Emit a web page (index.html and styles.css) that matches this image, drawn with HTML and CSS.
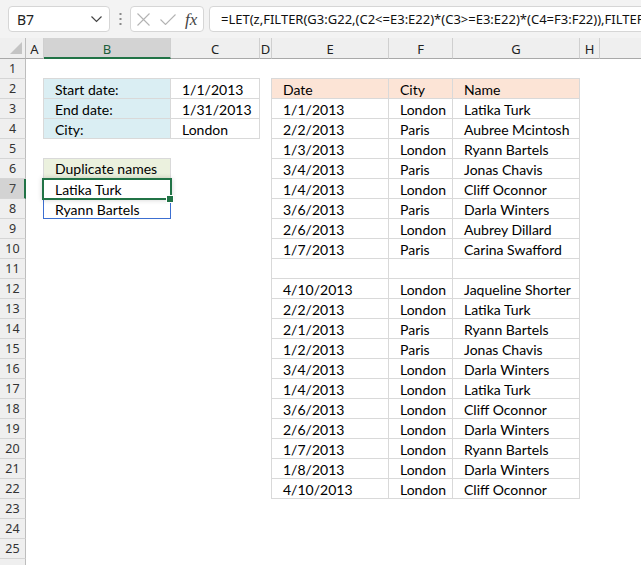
FILE: index.html
```html
<!DOCTYPE html>
<html>
<head>
<meta charset="utf-8">
<link rel="stylesheet" href="styles.css">
</head>
<body>
<div class="app">
  <div class="toolbar">
    <div class="namebox">
      <span class="ref">B7</span>
      <svg class="chev" width="11" height="7" viewBox="0 0 11 7"><path d="M0.5 0.5 L5.5 5.5 L10.5 0.5" fill="none" stroke="#444" stroke-width="1.2"/></svg>
    </div>
    <div class="dots">
      <svg width="3" height="12" viewBox="0 0 3 12"><rect x="0.5" y="0" width="2" height="2" fill="#8a8a8a"/><rect x="0.5" y="5" width="2" height="2" fill="#8a8a8a"/><rect x="0.5" y="10" width="2" height="2" fill="#8a8a8a"/></svg>
    </div>
    <div class="fxbox">
      <svg class="ico-x" width="13" height="13" viewBox="0 0 13 13"><path d="M0.5 0.5 L12.5 12.5 M12.5 0.5 L0.5 12.5" stroke="#b3b3b3" stroke-width="1.1" fill="none"/></svg>
      <svg class="ico-ok" width="16" height="11" viewBox="0 0 16 11"><path d="M0.5 5.5 L5.5 10.5 L15.5 0.5" stroke="#b3b3b3" stroke-width="1.1" fill="none"/></svg>
      <span class="fx">fx</span>
    </div>
    <div class="formula">=LET(z,FILTER(G3:G22,(C2&lt;=E3:E22)*(C3&gt;=E3:E22)*(C4=F3:F22)),FILTER</div>
  </div>

  <div class="sheet">
    <div class="corner"><svg width="12" height="12" viewBox="0 0 12 12"><polygon points="12,0 12,12 0,12" fill="#c4c4c4"/></svg></div>
    <div class="colhdr">A</div>
    <div class="colhdr active">B</div>
    <div class="colhdr">C</div>
    <div class="colhdr">D</div>
    <div class="colhdr">E</div>
    <div class="colhdr">F</div>
    <div class="colhdr">G</div>
    <div class="colhdr">H</div>
    <div class="colhdr last"></div>

    <div class="rowhdr">1</div>
    <div class="rowhdr">2</div>
    <div class="rowhdr">3</div>
    <div class="rowhdr">4</div>
    <div class="rowhdr">5</div>
    <div class="rowhdr">6</div>
    <div class="rowhdr active">7</div>
    <div class="rowhdr">8</div>
    <div class="rowhdr">9</div>
    <div class="rowhdr">10</div>
    <div class="rowhdr">11</div>
    <div class="rowhdr">12</div>
    <div class="rowhdr">13</div>
    <div class="rowhdr">14</div>
    <div class="rowhdr">15</div>
    <div class="rowhdr">16</div>
    <div class="rowhdr">17</div>
    <div class="rowhdr">18</div>
    <div class="rowhdr">19</div>
    <div class="rowhdr">20</div>
    <div class="rowhdr">21</div>
    <div class="rowhdr">22</div>
    <div class="rowhdr">23</div>
    <div class="rowhdr">24</div>
    <div class="rowhdr">25</div>
    <div class="rowhdr"></div>

    <div class="params">
      <div class="cell lbl">Start date:</div><div class="cell val">1/1/2013</div>
      <div class="cell lbl">End date:</div><div class="cell val">1/31/2013</div>
      <div class="cell lbl">City:</div><div class="cell val">London</div>
    </div>

    <div class="dup">
      <div class="cell duphead">Duplicate names</div>
      <div class="cell sel">Latika Turk</div>
      <div class="cell spill">Ryann Bartels</div>
    </div>

    <div class="data">
      <div class="cell th">Date</div><div class="cell th">City</div><div class="cell th">Name</div>
      <div class="cell">1/1/2013</div><div class="cell">London</div><div class="cell">Latika Turk</div>
      <div class="cell">2/2/2013</div><div class="cell">Paris</div><div class="cell">Aubree Mcintosh</div>
      <div class="cell">1/3/2013</div><div class="cell">London</div><div class="cell">Ryann Bartels</div>
      <div class="cell">3/4/2013</div><div class="cell">Paris</div><div class="cell">Jonas Chavis</div>
      <div class="cell">1/4/2013</div><div class="cell">London</div><div class="cell">Cliff Oconnor</div>
      <div class="cell">3/6/2013</div><div class="cell">Paris</div><div class="cell">Darla Winters</div>
      <div class="cell">2/6/2013</div><div class="cell">London</div><div class="cell">Aubrey Dillard</div>
      <div class="cell">1/7/2013</div><div class="cell">Paris</div><div class="cell">Carina Swafford</div>
      <div class="cell"></div><div class="cell"></div><div class="cell"></div>
      <div class="cell">4/10/2013</div><div class="cell">London</div><div class="cell">Jaqueline Shorter</div>
      <div class="cell">2/2/2013</div><div class="cell">London</div><div class="cell">Latika Turk</div>
      <div class="cell">2/1/2013</div><div class="cell">Paris</div><div class="cell">Ryann Bartels</div>
      <div class="cell">1/2/2013</div><div class="cell">Paris</div><div class="cell">Jonas Chavis</div>
      <div class="cell">3/4/2013</div><div class="cell">London</div><div class="cell">Darla Winters</div>
      <div class="cell">1/4/2013</div><div class="cell">London</div><div class="cell">Latika Turk</div>
      <div class="cell">3/6/2013</div><div class="cell">London</div><div class="cell">Cliff Oconnor</div>
      <div class="cell">2/6/2013</div><div class="cell">London</div><div class="cell">Darla Winters</div>
      <div class="cell">1/7/2013</div><div class="cell">London</div><div class="cell">Ryann Bartels</div>
      <div class="cell">1/8/2013</div><div class="cell">London</div><div class="cell">Darla Winters</div>
      <div class="cell">4/10/2013</div><div class="cell">London</div><div class="cell">Cliff Oconnor</div>
    </div>
  </div>
</div>
</body>
</html>
```

FILE: styles.css
```css
* { box-sizing: border-box; margin: 0; padding: 0; }
html, body { width: 641px; height: 565px; overflow: hidden; background: #fff; }
body { font-family: "Lato", "Noto Sans", sans-serif; color: #000; }

.app { width: 641px; height: 565px; overflow: hidden; display: flex; flex-direction: column; }

/* ---------- toolbar ---------- */
.toolbar {
  height: 38px; flex: none; background: #f3f3f3;
  display: flex; align-items: center; padding-left: 8px; overflow: hidden;
}
.namebox {
  flex: none; width: 102px; height: 26px; background: #fff;
  border: 1px solid #d6d6d6; border-radius: 4px;
  display: flex; align-items: center; justify-content: space-between;
  padding: 0 7px 0 8px;
  font-family: "Noto Sans", sans-serif; font-size: 14px; color: #222;
}
.chev { margin-top: 1px; }
.dots { flex: none; width: 20px; display: flex; justify-content: center; }
.fxbox {
  flex: none; width: 74px; height: 26px; background: #fff;
  border: 1px solid #d6d6d6; border-radius: 4px;
  display: flex; align-items: center; padding-left: 6px; gap: 0;
}
.ico-x { margin-right: 10px; }
.ico-ok { margin-right: 9px; margin-top: 1px; }
.fx {
  font-family: "Liberation Serif", serif; font-style: italic; font-size: 17px;
  color: #444; line-height: 1;
}
.formula {
  flex: none; width: 460px; height: 26px; margin-left: 5px; background: #fff;
  border: 1px solid #d6d6d6; border-radius: 4px;
  padding-left: 11px; white-space: nowrap; overflow: hidden;
  font-family: "Noto Sans", sans-serif; font-size: 13px; line-height: 24px; color: #111;
}

/* ---------- sheet grid ---------- */
.sheet {
  flex: 1; display: grid;
  grid-template-columns: 26px 18px 127px 89px 12px 117px 64px 127px 20px 1fr;
  grid-template-rows: 21px repeat(26, 20px);
  font-size: 14px;
}
.corner {
  background: #efefef; border-right: 1px solid #bdbdbd; border-bottom: 1px solid #a9a9a9;
  display: flex; align-items: flex-end; justify-content: flex-end; padding: 0 3px 4px 0;
}
.colhdr {
  background: #efefef; border-right: 1px solid #cfcfcf; border-bottom: 1px solid #a9a9a9;
  display: flex; align-items: center; justify-content: center; padding-top: 1px;
  font-family: "Noto Sans", sans-serif; font-size: 13px; color: #222;
}
.colhdr.last { border-right: none; }
.colhdr.active { background: #d3d3d3; border-bottom: 2px solid #217346; color: #1b5e3a; padding-top: 2px; }
.rowhdr {
  grid-column: 1;
  background: #efefef; border-right: 1px solid #bdbdbd; border-bottom: 1px solid #d5d5d5;
  display: flex; align-items: center; justify-content: center;
  font-family: "Noto Sans", sans-serif; font-size: 12.5px; color: #333;
}
.rowhdr.active { background: #d3d3d3; border-right: 2px solid #217346; padding-left: 1px; color: #444; }

.cell {
  height: 20px; line-height: 19px; padding: 1px 0 0 11px; white-space: nowrap; overflow: visible;
  border-right: 1px solid #d9d9d9; border-bottom: 1px solid #d9d9d9;
}

/* parameters B2:C4 */
.params {
  grid-column: 3 / 5; grid-row: 3 / 6;
  margin: -1px 0 0 -1px; width: 217px; height: 61px;
  display: grid; grid-template-columns: 127px 89px;
  border-left: 1px solid #d9d9d9; border-top: 1px solid #d9d9d9;
}
.params .lbl { background: #daeef3; }

/* duplicate names B6:B8 */
.dup {
  grid-column: 3; grid-row: 7 / 10;
  margin: -1px 0 0 -1px; width: 128px;
  display: flex; flex-direction: column;
}
.dup .duphead {
  height: 21px; line-height: 19px; padding-top: 0; background: #ebf1de;
  border: 1px solid #d9d9d9;
}
.dup .sel {
  position: relative; border: none; border-left: 1px solid #3c6fd1; border-right: 1px solid #3c6fd1;
}
.dup .sel::after {
  content: ""; position: absolute; left: -2px; top: -1px; right: -2px; bottom: -1px;
  border: 2px solid #217346; box-shadow: 0 0 5px rgba(0,0,0,0.18);
}
.dup .sel::before {
  content: ""; position: absolute; right: -4px; bottom: -4px; width: 6px; height: 6px;
  background: #217346; border: 1px solid #fff; z-index: 2;
}
.dup .spill {
  border: 1px solid #3c6fd1; border-top: none;
}

/* data E2:G22 */
.data {
  grid-column: 6 / 9; grid-row: 3 / 24;
  margin: -1px 0 0 -1px; width: 309px;
  display: grid; grid-template-columns: 117px 64px 127px; grid-auto-rows: 20px;
  border-left: 1px solid #d9d9d9; border-top: 1px solid #d9d9d9;
}
.data .th { background: #fce4d6; }
```
